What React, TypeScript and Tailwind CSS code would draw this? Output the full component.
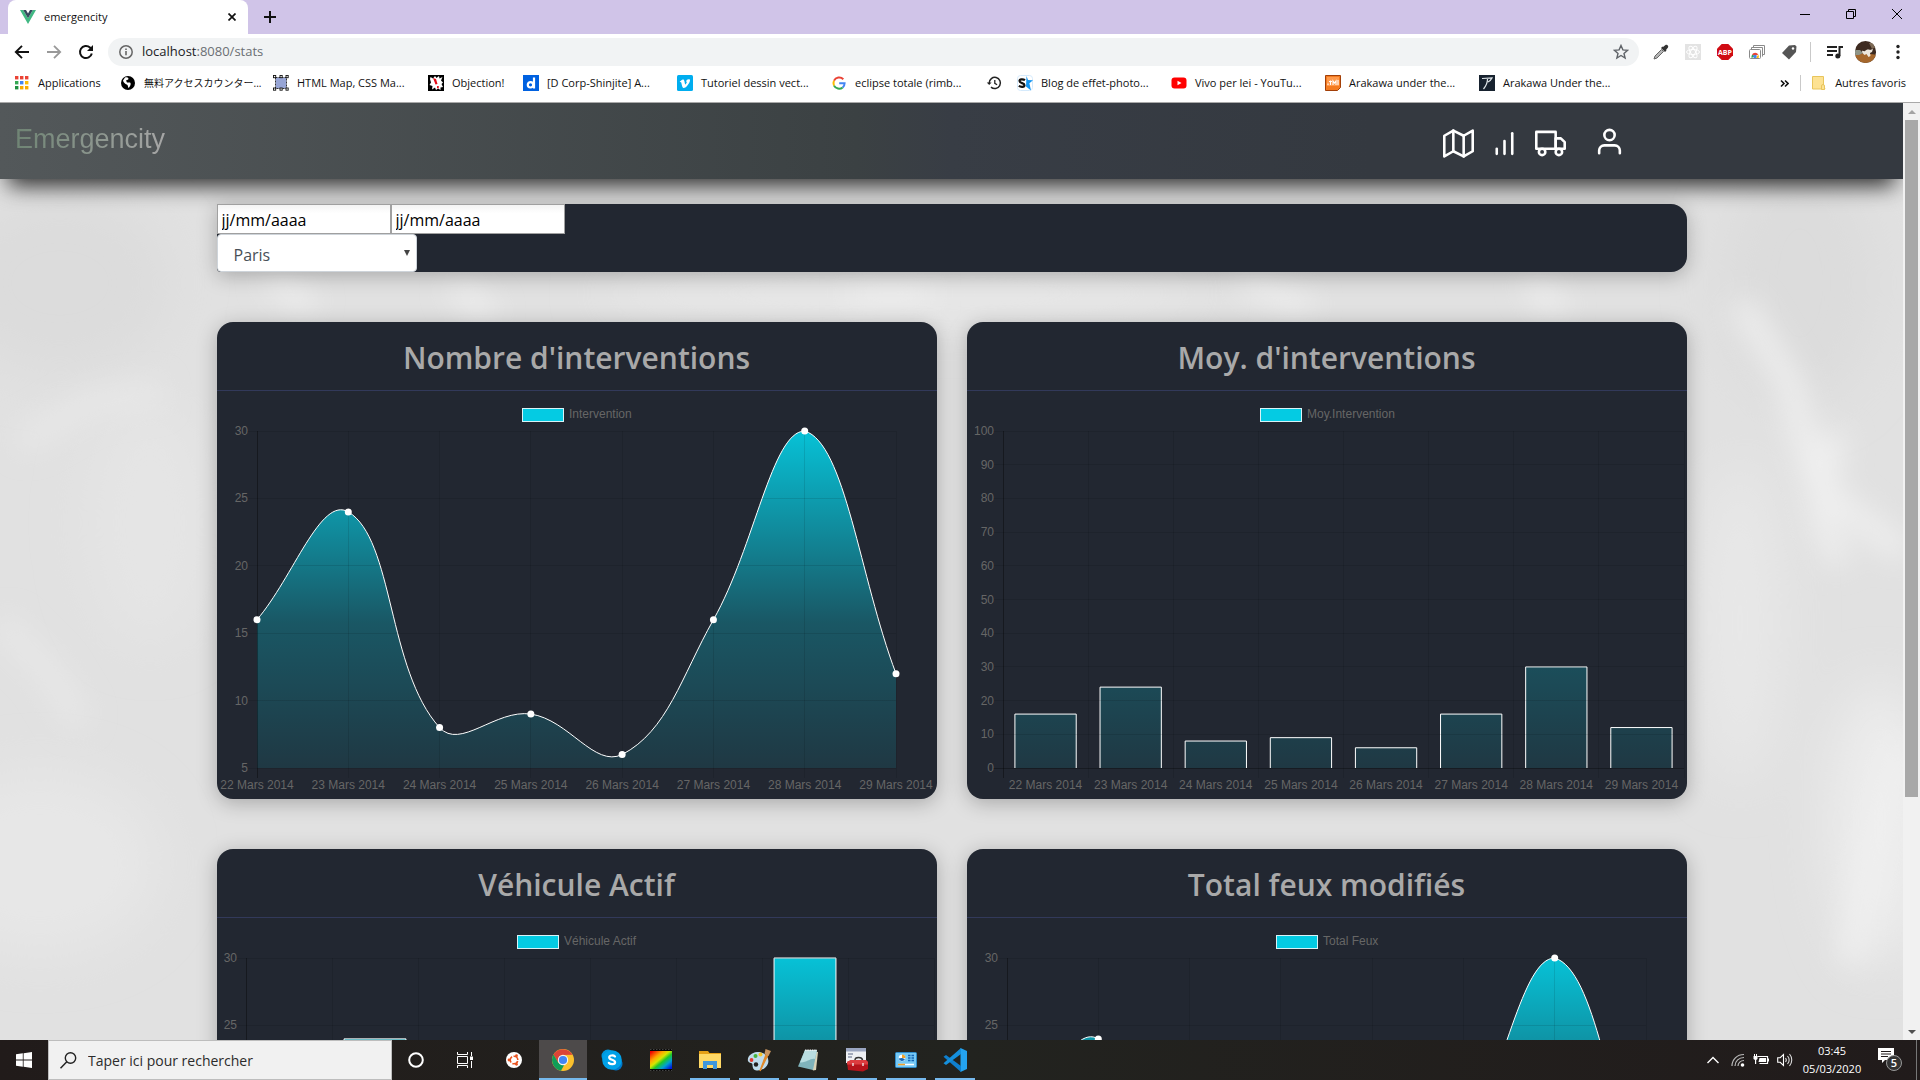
import type { ReactNode } from "react";
import { FiBarChart, FiMap, FiTruck, FiUser } from "react-icons/fi";

const UI = "font-['Open_Sans','Noto_Sans_CJK_JP',sans-serif]";

/* ---------- charts ---------- */

const DAYS = [22, 23, 24, 25, 26, 27, 28, 29].map((d) => `${d} Mars 2014`);
const VALUES = [16, 24, 8, 9, 6, 16, 30, 12];
const TOP = 40;
const BOTTOM = 377;

type Point = { x: number; y: number };

function splinePath(points: Point[], tension = 0.4) {
  const controls = points.map((p, i) => {
    const prev = points[i - 1] ?? p;
    const next = points[i + 1] ?? p;
    const d01 = Math.hypot(p.x - prev.x, p.y - prev.y);
    const d12 = Math.hypot(next.x - p.x, next.y - p.y);
    const s01 = d01 / (d01 + d12) || 0;
    const s12 = d12 / (d01 + d12) || 0;
    const clamp = (v: number) => Math.max(TOP, Math.min(BOTTOM, v));
    return {
      before: { x: p.x - tension * s01 * (next.x - prev.x), y: clamp(p.y - tension * s01 * (next.y - prev.y)) },
      after: { x: p.x + tension * s12 * (next.x - prev.x), y: clamp(p.y + tension * s12 * (next.y - prev.y)) },
    };
  });
  return points
    .map((p, i) => {
      if (i === 0) return `M${p.x} ${p.y}`;
      const a = controls[i - 1].after;
      const b = controls[i].before;
      return `C${a.x} ${a.y} ${b.x} ${b.y} ${p.x} ${p.y}`;
    })
    .join(" ");
}

type ChartProps = {
  id: string;
  kind: "line" | "bar";
  label: string;
  left: number;
  right: number;
  min: number;
  max: number;
  step: number;
  legendX: number;
};

function Chart({ id, kind, label, left, right, min, max, step, legendX }: ChartProps) {
  const y = (v: number) => BOTTOM - ((v - min) / (max - min)) * (BOTTOM - TOP);
  const slots = kind === "line" ? DAYS.length - 1 : DAYS.length;
  const slot = (right - left) / slots;
  const center = (i: number) => left + slot * (kind === "line" ? i : i + 0.5);
  const ticks = Array.from({ length: (max - min) / step + 1 }, (_, i) => min + i * step);
  const points = VALUES.map((v, i) => ({ x: center(i), y: y(v) }));
  const curve = splinePath(points);
  const bar = slot * 0.72;

  return (
    <svg viewBox="0 0 720 408" className="block h-auto w-full" role="img" aria-label={label}>
      <defs>
        <linearGradient id={id} gradientUnits="userSpaceOnUse" x1="0" y1="7" x2="0" y2="457">
          <stop offset="0" stopColor="#00e7ff" stopOpacity="0.9" />
          <stop offset="0.5" stopColor="#00e7ff" stopOpacity="0.25" />
          <stop offset="1" stopColor="#00e7ff" stopOpacity="0" />
        </linearGradient>
      </defs>

      {kind === "line" ? (
        <>
          <path d={`${curve} L${right} ${BOTTOM} L${left} ${BOTTOM} Z`} fill={`url(#${id})`} />
          <path d={curve} fill="none" stroke="#fff" strokeWidth="1" />
        </>
      ) : (
        points.map((p) => (
          <g key={p.x}>
            <rect x={p.x - bar / 2} y={p.y} width={bar} height={BOTTOM - p.y} fill={`url(#${id})`} />
            <path
              d={`M${p.x - bar / 2} ${BOTTOM} V${p.y} H${p.x + bar / 2} V${BOTTOM}`}
              fill="none"
              stroke="#fff"
              strokeWidth="1"
            />
          </g>
        ))
      )}

      <g stroke="#000" shapeRendering="crispEdges">
        {ticks.map((t) => (
          <line key={t} x1={left - 10} x2={right} y1={y(t)} y2={y(t)} strokeOpacity={t === 0 ? 0.3 : 0.1} />
        ))}
        {Array.from({ length: slots + 1 }, (_, i) => (
          <line
            key={i}
            x1={left + slot * i}
            x2={left + slot * i}
            y1={TOP}
            y2={BOTTOM + 10}
            strokeOpacity={i === 0 ? 0.35 : 0.1}
          />
        ))}
      </g>

      {kind === "line" && points.map((p) => <circle key={p.x} cx={p.x} cy={p.y} r="3.5" fill="#fff" />)}

      <rect x={legendX + 0.5} y="17.5" width="41" height="13" fill="#04cbe3" stroke="#d9f3f7" />
      <g className="font-['Liberation_Sans',sans-serif] text-[12px]" fill="#666">
        <text x={legendX + 47} y="27">
          {label}
        </text>
        {ticks.map((t) => (
          <text key={t} x={left - 9} y={y(t) + 4} textAnchor="end">
            {t}
          </text>
        ))}
        {DAYS.map((d, i) => (
          <text key={d} x={center(i)} y="398" textAnchor="middle">
            {d}
          </text>
        ))}
      </g>
    </svg>
  );
}

function ChartCard({ title, children }: { title: string; children: ReactNode }) {
  return (
    <section className="overflow-hidden rounded-2xl bg-[#222731] shadow-[0_4px_20px_rgba(0,0,0,0.25)]">
      <h2
        className={`${UI} flex h-[69px] items-center justify-center border-b border-[#32395a] pt-1 text-[30px] leading-9 font-semibold text-[#a9a9a9]`}
      >
        {title}
      </h2>
      {children}
    </section>
  );
}

/* ---------- browser chrome ---------- */

function Svg({ className = "size-4", box = "0 0 16 16", children }: { className?: string; box?: string; children: ReactNode }) {
  return (
    <svg viewBox={box} className={`${className} shrink-0`} fill="none" aria-hidden="true">
      {children}
    </svg>
  );
}

const HistoryIcon = (
  <Svg>
    <path d="M3.2 8a5.6 5.6 0 1 1 1.8 4.1" stroke="#222" strokeWidth="1.5" />
    <path d="M.8 7.4h4.8L3.2 10z" fill="#222" />
    <path d="M8.8 5v3.4l2.3 1.4" stroke="#222" strokeWidth="1.3" />
  </Svg>
);

const BOOKMARKS: { text: string; width: string; size?: string; icon: ReactNode }[] = [
  {
    text: "Applications",
    width: "w-[106px]",
    icon: (
      <Svg>
        {["#ea4335", "#ea4335", "#ea4335", "#34a853", "#4285f4", "#fbbc05", "#1e8e3e", "#f9ab00", "#f9ab00"].map((c, i) => (
          <rect key={i} x={1 + (i % 3) * 5} y={1 + Math.floor(i / 3) * 5} width="3.4" height="3.4" fill={c} />
        ))}
      </Svg>
    ),
  },
  {
    text: "無料アクセスカウンター...",
    width: "w-[153px]",
    size: "text-[10px]",
    icon: (
      <Svg>
        <circle cx="8" cy="8" r="7" fill="#000" />
        <path d="M5 2.5c3-.6 4 .6 3.2 2.1L6 5.6 7 7.5h3c1.6 1.5 0 4-1.5 5.5-.8-1.2-.3-3-1.800-3.500S3.500 7.500 3 5.500z" fill="#fff" />
      </Svg>
    ),
  },
  {
    text: "HTML Map, CSS Ma...",
    width: "w-[155px]",
    icon: (
      <Svg>
        <path d="M2.500 2.500h11v11h-11z" fill="#97a5d6" stroke="#333" strokeDasharray="2 1" />
        {[[.5, .5], [7, .5], [13, .5], [.5, 13], [7, 13], [13, 13]].map(([x, y]) => (
          <rect key={`${x}-${y}`} x={x} y={y} width="2.200" height="2.200" fill="#fff" stroke="#111" strokeWidth=".9" />
        ))}
      </Svg>
    ),
  },
  {
    text: "Objection!",
    width: "w-[95px]",
    icon: (
      <Svg>
        <rect width="16" height="16" fill="#000" />
        <path d="m2 4 .5-2 2.500 1.500L7 1l1.500 2L11 1l.5 2.500L14.500 2 13 5.500l2 2-1.500 1.500 1.500 3-2.500.5V15L10 13.500 8 15l-1-2.500-3 2 .5-3.500L1.500 10 3 7.500z" fill="#fff" />
        <path d="m5 3 3 1 1.500 5-2 .5zM9 11l2 .3-.5 2.200-1.500-.5z" fill="#e30b17" />
      </Svg>
    ),
  },
  {
    text: "[D Corp-Shinjite] A...",
    width: "w-[154px]",
    icon: (
      <Svg>
        <rect width="16" height="16" fill="#0061e0" />
        <circle cx="7.500" cy="9.800" r="2.700" stroke="#fff" strokeWidth="2.200" />
        <path d="M11 2.500V13.500" stroke="#fff" strokeWidth="2.200" />
      </Svg>
    ),
  },
  {
    text: "Tutoriel dessin vect...",
    width: "w-[154px]",
    icon: (
      <Svg>
        <rect width="16" height="16" rx="1.500" fill="#00adef" />
        <path
          d="M13 5.400c-.1 1.300-1 3-2.600 5.100C8.800 12.600 7.400 13 6.600 12.900c-.9 0-1.400-1.300-1.900-3.400C4.400 8.200 4.300 7 3.700 7l-.5.3-.5-.6C4 5.700 5 4.500 5.800 4.400c.9-.1 1.400.5 1.700 2.100.3 1.800.6 3 .9 3 .3 0 1.400-1.700 1.400-2.300 0-.5-.3-.7-.9-.5.5-1.700 1.500-2.500 2.800-2.500 1 0 1.400.4 1.300 1.200z"
          fill="#fff"
        />
      </Svg>
    ),
  },
  {
    text: "eclipse totale (rimb...",
    width: "w-[155px]",
    icon: (
      <Svg>
        <path d="M12.300 4.200A5.700 5.700 0 0 0 3 5.700" stroke="#ea4335" strokeWidth="2" />
        <path d="M3 5.700a5.700 5.700 0 0 0 0 4.900" stroke="#fbbc05" strokeWidth="2" />
        <path d="M3 10.600a5.700 5.700 0 0 0 8.700 1.800" stroke="#34a853" strokeWidth="2" />
        <path d="M11.700 12.400a5.700 5.700 0 0 0 1.900-4.200H8.200" stroke="#4285f4" strokeWidth="2" />
      </Svg>
    ),
  },
  { text: "", width: "w-[31px]", icon: HistoryIcon },
  {
    text: "Blog de effet-photo...",
    width: "w-[154px]",
    icon: (
      <Svg>
        <rect x=".5" y=".5" width="15" height="15" rx="3" fill="#fff" stroke="#d5eafc" />
        <path d="m9.500 1 1.500 4 5 .2-3.600 3L14 15.500l-5-4z" fill="#1596f2" />
        <path d="M8 5.200C6 3.800 2.500 4 2.500 6c0 2.500 5 1.800 5 4.200 0 2-3.600 2-5.700.7" stroke="#111" strokeWidth="2.200" />
      </Svg>
    ),
  },
  {
    text: "Vivo per lei - YouTu...",
    width: "w-[154px]",
    icon: (
      <Svg>
        <rect x=".5" y="2.500" width="15" height="11" rx="3" fill="#f00" />
        <path d="m6.500 5.800 4 2.200-4 2.200z" fill="#fff" />
      </Svg>
    ),
  },
  {
    text: "Arakawa under the...",
    width: "w-[154px]",
    icon: (
      <Svg>
        <path d="M.5.5h15v12l-3 3H.5z" fill="#f47b20" stroke="#a23f08" />
        <path d="M2 2h12v9H2z" fill="#ff9a4d" />
        <path d="M3 10V8.500M5.500 10V5.500M4 6.500h3M8 10V6l1.500 2L11 6v4M13 5v5" stroke="#fff" strokeWidth="1.100" />
      </Svg>
    ),
  },
  {
    text: "Arakawa Under the...",
    width: "w-[154px]",
    icon: (
      <Svg>
        <rect width="16" height="16" fill="#17222f" />
        <path d="M3 3.500 13 3c-1 2-2 3-4 4M8.500 4c0 4-1.500 7-4 10" stroke="#dfe6ea" strokeWidth="1.200" />
      </Svg>
    ),
  },
];

function Browser() {
  return (
    <header className={`${UI} shrink-0 bg-white text-[11px] text-[#111]`}>
      <div className="flex h-[34px] bg-[#d0c4e8] pl-2">
        <div className="flex w-60 items-center rounded-t-lg bg-white pr-2 pl-3">
          <Svg className="size-4">
            <path d="M0 1h3.200L8 9.300 12.800 1H16L8 15z" fill="#41b883" />
            <path d="M3.200 1H6l2 3.400L10 1h2.800L8 9.300z" fill="#35495e" />
          </Svg>
          <span className="ml-2 flex-1">emergencity</span>
          <button aria-label="Fermer l'onglet" className="flex size-4 items-center justify-center">
            <Svg className="size-2" box="0 0 8 8">
              <path d="m.5.5 7 7m0-7-7 7" stroke="#111" strokeWidth="1.700" />
            </Svg>
          </button>
        </div>
        <button aria-label="Nouvel onglet" className="ml-4 flex items-center">
          <Svg className="size-3" box="0 0 12 12">
            <path d="M6 0v12M0 6h12" stroke="#111" strokeWidth="2" />
          </Svg>
        </button>
        <div className="ml-auto flex h-7 text-black">
          <button aria-label="Réduire" className="flex w-[46px] items-center justify-center">
            <Svg className="size-[10px]" box="0 0 10 10">
              <path d="M0 5.500h10" stroke="currentColor" />
            </Svg>
          </button>
          <button aria-label="Restaurer" className="flex w-[46px] items-center justify-center">
            <Svg className="size-[10px]" box="0 0 10 10">
              <path d="M.5 2.500h7v7h-7zM2.500 2.500v-2h7v7h-2" stroke="currentColor" />
            </Svg>
          </button>
          <button aria-label="Fermer" className="flex w-[46px] items-center justify-center">
            <Svg className="size-[10px]" box="0 0 10 10">
              <path d="m0 0 10 10M10 0 0 10" stroke="currentColor" />
            </Svg>
          </button>
        </div>
      </div>

      <div className="flex h-[34px] items-center pt-[2px]">
        <nav className="flex w-[108px] shrink-0 items-center gap-4 pl-[14px]">
          <button aria-label="Précédent">
            <Svg>
              <path d="M15 8H2m6-6.200L1.800 8 8 14.200" stroke="#111" strokeWidth="1.900" />
            </Svg>
          </button>
          <button aria-label="Suivant">
            <Svg>
              <path d="M1 8h13M8 1.800 14.200 8 8 14.200" stroke="#999" strokeWidth="1.800" />
            </Svg>
          </button>
          <button aria-label="Actualiser">
            <Svg>
              <path d="M13.800 9.500A6 6 0 1 1 12 3.600l1.500 1.400" stroke="#111" strokeWidth="2" />
              <path d="M15 1v6H9z" fill="#111" />
            </Svg>
          </button>
        </nav>
        <div className="flex h-7 flex-1 items-center rounded-full bg-[#f1f3f4] pr-[10px] pl-[11px]">
          <Svg className="size-[14px]" box="0 0 14 14">
            <circle cx="7" cy="7" r="6.200" stroke="#666" strokeWidth="1.500" />
            <path d="M7 6v4.300M7 3.500v1.600" stroke="#666" strokeWidth="1.600" />
          </Svg>
          <div className="ml-[9px] flex-1 text-[13px] text-[#6b6f73]">
            <span className="text-[#202124]">localhost</span>:8080/stats
          </div>
          <button aria-label="Ajouter aux favoris">
            <Svg>
              <path d="m8 1.500 1.900 4.400 4.700.4L11 9.400l1.100 4.600L8 11.500 3.900 14 5 9.400 1.400 6.300l4.700-.4z" stroke="#5f6368" strokeWidth="1.400" />
            </Svg>
          </button>
        </div>
        <div className="flex w-[281px] shrink-0 items-center pl-[14px]">
          <div className="flex flex-1 items-center gap-4">
            <Svg>
              <path d="m1 15 1-3 6.500-6.500 2 2L4 14z" fill="#b5b5b5" stroke="#666" />
              <path d="m8 4 4 4 1.500-1.500-.5-.5 2-2.500C16 2 14 0 12.500 1L10 3l-.5-.5z" fill="#333" />
            </Svg>
            <Svg>
              <rect width="16" height="16" fill="#e3e3e3" />
              <g stroke="#fff">
                <ellipse cx="8" cy="8" rx="6.500" ry="2.500" />
                <ellipse cx="8" cy="8" rx="6.500" ry="2.500" transform="rotate(60 8 8)" />
                <ellipse cx="8" cy="8" rx="6.500" ry="2.500" transform="rotate(120 8 8)" />
              </g>
            </Svg>
            <svg viewBox="0 0 16 16" className="size-4" aria-hidden="true">
              <path d="M4.700 0h6.600L16 4.700v6.600L11.300 16H4.700L0 11.300V4.700z" fill="#d00b13" />
              <text x="8" y="10.500" textAnchor="middle" fill="#fff" className="text-[7px] font-bold">
                ABP
              </text>
            </svg>
            <Svg>
              <path d="M4.500 4V1.500h11v9H13" stroke="#8a8a8a" />
              <path d="M2.500 6V3.500h11v9" stroke="#8a8a8a" />
              <rect x=".5" y="5.500" width="11" height="9" rx="1" fill="#fff" stroke="#8a8a8a" />
              <path d="M2.500 14a3.500 3.500 0 0 1 1-3.500l2.500 2z" fill="#34a853" />
              <path d="M3 10.500a3.600 3.600 0 0 1 6.300 0L6 12z" fill="#ea4335" />
              <path d="M9.300 10.500A3.500 3.500 0 0 1 9.500 14H7z" fill="#fbbc05" />
              <circle cx="6" cy="12.500" r="1.700" fill="#4285f4" />
            </Svg>
            <Svg>
              <path d="M8 1.500 14 1l1.500 1.500L15 8l-7 7.500L1 9z" fill="#555" />
              <circle cx="12" cy="4.500" r="1.200" fill="#fff" />
            </Svg>
            <span className="-ml-[3px] h-5 w-px bg-[#c9c9c9]" />
            <Svg className="size-4">
              <path d="M0 3h10M0 7h10M0 11h6" stroke="#222" strokeWidth="1.800" />
              <path d="M12.500 12V3H16" stroke="#222" strokeWidth="2" />
              <circle cx="10.800" cy="12" r="2.500" fill="#222" />
            </Svg>
          </div>
          <div className="mr-[20px] ml-3 size-[22px] overflow-hidden rounded-full">
            <Svg className="size-[22px]" box="0 0 22 22">
              <rect width="22" height="22" fill="#3d2a20" />
              <path d="M0 14 9 12l13 2v8H0z" fill="#a5672c" />
              <path d="M0 9h5l3 3-4 2H0z" fill="#8f9588" />
              <path d="M14 2h5l2 4-4 2z" fill="#7d6a55" />
              <path d="M7 10c1-1 2 1 3 0s3-2 5-1l3-1-1 3-2 1 .5 3-2 1-2-3-2 1-2-2z" fill="#ece6dc" />
            </Svg>
          </div>
          <button aria-label="Menu" className="mr-[20px]">
            <Svg className="h-4 w-1" box="0 0 4 16">
              <circle cx="2" cy="2.500" r="1.700" fill="#222" />
              <circle cx="2" cy="8" r="1.700" fill="#222" />
              <circle cx="2" cy="13.500" r="1.700" fill="#222" />
            </Svg>
          </button>
        </div>
      </div>

      <div className="flex h-[35px] items-center border-b border-[#a9a9a9] pr-[14px] pb-1 pl-[14px]">
        <nav className="flex flex-1 overflow-hidden">
          {BOOKMARKS.map((b, i) => (
            <a
              key={i}
              href="#"
              aria-label={b.text || "Historique"}
              className={`${b.width} ${b.size ?? ""} flex shrink-0 items-center gap-2 whitespace-nowrap`}
            >
              {b.icon}
              {b.text}
            </a>
          ))}
        </nav>
        <button aria-label="Plus de favoris" className="mr-[11px]">
          <Svg className="size-[9px]" box="0 0 9 9">
            <path d="m1 1.500 3 3-3 3m4-6 3 3-3 3" stroke="#111" strokeWidth="1.600" />
          </Svg>
        </button>
        <span className="mr-[10px] h-4 w-px bg-[#c9c9c9]" />
        <a href="#" className="flex items-center gap-2">
          <Svg>
            <path d="M1.500 1.500h11v9l1.500 3.500H1.500z" fill="#fde293" stroke="#e8c55c" />
            <path d="M10.500 14.500V11a1.500 1.500 0 0 1 3 0v3.500z" fill="#fde293" stroke="#e8c55c" />
          </Svg>
          Autres favoris
        </a>
      </div>
    </header>
  );
}

/* ---------- taskbar ---------- */

type Task = { name: string; open?: boolean; active?: boolean; icon: ReactNode };

const TASKS: Task[] = [
  {
    name: "Cortana",
    icon: (
      <Svg className="size-4">
        <circle cx="8" cy="8" r="6.800" stroke="#fff" strokeWidth="2" />
      </Svg>
    ),
  },
  {
    name: "Vue des tâches",
    icon: (
      <Svg className="size-4">
        <path d="M.5 0v2.500h10V0M.5 4.500h10v7H.5zM.5 16v-2.500h10V16M14.500 0v4M14.500 9v7" stroke="#fff" />
        <rect x="13" y="4.500" width="3" height="3.500" fill="#fff" />
      </Svg>
    ),
  },
  {
    name: "Ubuntu",
    icon: (
      <Svg className="size-4">
        <circle cx="8" cy="8" r="8" fill="#fff" />
        <circle cx="8" cy="8" r="3.800" stroke="#e95420" strokeWidth="1.600" strokeDasharray="6.500 1.460" strokeDashoffset="-1" />
        <circle cx="3" cy="8" r="1.400" fill="#e95420" />
        <circle cx="10.500" cy="3.700" r="1.400" fill="#e95420" />
        <circle cx="10.500" cy="12.300" r="1.400" fill="#e95420" />
      </Svg>
    ),
  },
  {
    name: "Chrome",
    active: true,
    icon: (
      <Svg className="size-[22px]" box="0 0 22 22">
        <circle cx="11" cy="11" r="11" fill="#fbc02d" />
        <path d="M1.500 5.500A11 11 0 0 1 20.500 5.800L11 6 6 13.500z" fill="#db4437" />
        <path d="M1.500 5.500 6.300 13.700l5.700 2.600-3 5.500A11 11 0 0 1 1.500 5.500z" fill="#0f9d58" />
        <circle cx="11" cy="11" r="5.200" fill="#f4f4f4" />
        <circle cx="11" cy="11" r="4.100" fill="#4285f4" />
      </Svg>
    ),
  },
  {
    name: "Skype",
    icon: (
      <Svg className="size-[22px]" box="0 0 22 22">
        <circle cx="7" cy="7" r="6.500" fill="#0097dc" />
        <circle cx="15" cy="15" r="6.500" fill="#0078ca" />
        <circle cx="11" cy="11" r="9.800" fill="#00a1e8" />
        <path d="M14 7.500C12.500 6 8.200 6 8.200 8.400c0 2.800 5.900 1.900 5.900 4.800 0 2.500-4.700 2.300-6.300.7" stroke="#fff" strokeWidth="2.200" strokeLinecap="round" />
      </Svg>
    ),
  },
  {
    name: "Vidéo",
    icon: (
      <Svg className="size-[22px]" box="0 0 22 22">
        <defs>
          <linearGradient id="rainbow" x1="0" y1="0" x2="1" y2="1">
            <stop offset="0.05" stopColor="#f00000" />
            <stop offset="0.3" stopColor="#ffa500" />
            <stop offset="0.45" stopColor="#d6e600" />
            <stop offset="0.58" stopColor="#1ec828" />
            <stop offset="0.75" stopColor="#00a0d0" />
            <stop offset="0.95" stopColor="#0018e0" />
          </linearGradient>
        </defs>
        <rect width="22" height="22" fill="#080808" />
        <path d="M0 .5h22M0 21.500h22" stroke="#444" strokeDasharray="1.500 1.500" />
        <rect y="2" width="22" height="18" fill="url(#rainbow)" />
      </Svg>
    ),
  },
  {
    name: "Explorateur de fichiers",
    open: true,
    icon: (
      <Svg className="size-[22px]" box="0 0 22 22">
        <path d="M0 2h9l1.500 2H22v15H0z" fill="#e6a117" />
        <path d="M0 5h22v14H0z" fill="#ffd966" />
        <path d="M4 20v-8h14v8h-4v-4H8v4z" fill="#3f97dc" />
      </Svg>
    ),
  },
  {
    name: "Paint",
    open: true,
    icon: (
      <Svg className="size-6" box="0 0 24 24">
        <path d="M10 4C4 4.500 0 9 1 13c.6 2 3 1.500 4 2.500s0 4 2 6c3 2.500 12 .5 14-6C23 9 17 3.500 10 4z" fill="#bfdcec" />
        <circle cx="4.500" cy="12" r="1.900" fill="#e23b2e" />
        <circle cx="8.500" cy="8" r="2" fill="#46b43c" />
        <circle cx="13.500" cy="6.500" r="2" fill="#f3c22b" />
        <circle cx="9" cy="16.500" r="2.200" fill="#23201e" />
        <path d="m13 23 6-16 1.500.7z" fill="#e08a2c" stroke="#e08a2c" strokeWidth="1.500" />
        <path d="m17.500 6 1-5L24 3l-2.500 5z" fill="#c9955f" />
      </Svg>
    ),
  },
  {
    name: "Bloc-notes",
    open: true,
    icon: (
      <Svg className="size-[22px]" box="0 0 22 22">
        <path d="m8 2 13 1-2 18-3 .5z" fill="#d8d2b8" />
        <path d="M8 1h12l-4 20-15-3.500z" fill="#7fb3bb" />
        <path d="M8 1h12l-2 9c-5-1-8 4-15 3.500z" fill="#b9dde0" />
        <path d="M8 1.200h12" stroke="#e9eef0" strokeWidth="1.600" strokeDasharray="1.500 .8" />
      </Svg>
    ),
  },
  {
    name: "Outils",
    open: true,
    icon: (
      <Svg className="size-6" box="0 0 24 24">
        <rect x="1" width="20" height="15" fill="#eef0f4" />
        <path d="M1 0h20v3.500H1z" fill="#9aa5c0" />
        <path d="M3 6h5m-5 3h4" stroke="#8b93a8" strokeWidth="1.500" />
        <path d="M10 12c0-3.500 7-3.500 7.500 0" stroke="#333" strokeWidth="1.500" />
        <path d="m2 14 4-2h15l2 2v7l-5 2.500L3 22z" fill="#b5141b" />
        <path d="m2 14 4-2h15l2 2v2.500L2 16.500z" fill="#dc3c3f" />
        <path d="M8 15v3m10-3v3" stroke="#eee" strokeWidth="1.300" />
      </Svg>
    ),
  },
  {
    name: "Panneau de configuration",
    open: true,
    icon: (
      <Svg className="size-[22px]" box="0 0 22 22">
        <rect x=".5" y="3.500" width="21" height="15" rx="1" fill="#76c9f5" stroke="#2f8ccb" />
        <circle cx="7" cy="9" r="3.300" fill="#fff" />
        <path d="M7 9V5.500A3.500 3.500 0 0 1 10.500 9z" fill="#f3a32b" />
        <path d="M3.700 9.500A3.300 3.300 0 0 0 10 10L7 9z" fill="#1565b5" />
        <path d="M13 6.500h6M13 9h6m-6 2.500h6" stroke="#1565b5" strokeWidth="1.500" strokeDasharray="2.500 1" />
        <path d="M3 15.500h16" stroke="#fff" strokeWidth="1.500" />
        <path d="M3 15.500h7" stroke="#f3a32b" strokeWidth="1.500" />
      </Svg>
    ),
  },
  {
    name: "Visual Studio Code",
    open: true,
    icon: (
      <Svg className="size-6" box="0 0 24 24">
        <path d="M17.500 0 24 3v18l-6.500 3z" fill="#24a3f0" />
        <path d="M.5 8.800 3 7l15 11v6z" fill="#0f7fce" />
        <path d="M.5 15.200 3 17 18 6V0z" fill="#1590dd" />
      </Svg>
    ),
  },
];

function Taskbar() {
  return (
    <footer className={`${UI} flex h-10 shrink-0 bg-linear-to-r from-[#211b1a] via-[#22231f] to-[#211b1b] text-white`}>
      <button aria-label="Démarrer" className="flex w-12 items-center justify-center">
        <Svg>
          <path d="M0 2.300 6.800 1.300V7.600H0zM7.600 1.200 16 0v7.600H7.600zM0 8.400h6.800v6.300L0 13.700zM7.600 8.400H16V16l-8.400-1.200z" fill="#fff" />
        </Svg>
      </button>
      <label className="flex w-[344px] items-center border border-[#bdbdbd] bg-[#f1f1f1] pl-[11px]">
        <Svg className="size-[17px]" box="0 0 17 17">
          <circle cx="10.500" cy="6" r="5.200" stroke="#222" strokeWidth="1.400" />
          <path d="M6.800 9.800.5 16.300" stroke="#222" strokeWidth="1.500" />
        </Svg>
        <input
          type="text"
          aria-label="Rechercher"
          placeholder="Taper ici pour rechercher"
          className="ml-[11px] w-full bg-transparent text-[14px] placeholder:text-[#2b2b2b]"
        />
      </label>
      <div className="flex gap-px">
        {TASKS.map((t) => (
          <button
            key={t.name}
            aria-label={t.name}
            className={`flex w-12 flex-col items-center ${t.active ? "bg-[#4d4a4a]" : ""}`}
          >
            <span className="flex w-full flex-1 items-center justify-center pt-[2px]">{t.icon}</span>
            <span className={`h-[2px] ${t.active ? "w-full bg-[#76b9ed]" : t.open ? "w-10 bg-[#76b9ed]" : "w-10"}`} />
          </button>
        ))}
      </div>
      <div className="ml-auto flex items-center">
        <Svg className="mr-3 h-2 w-3" box="0 0 12 8">
          <path d="M.5 7 6 1.500 11.500 7" stroke="#fff" strokeWidth="1.400" />
        </Svg>
        <Svg className="mr-2 size-[14px]" box="0 0 14 14">
          <path d="M1 13C1 6.500 6 1.500 13 1.500M4 13c0-5 4-8.500 9-8.500M7 13c0-3 2.500-5.500 6-5.500" stroke="#bbb" strokeWidth="1.200" />
          <circle cx="11.500" cy="12" r="1.800" fill="#fff" />
        </Svg>
        <Svg className="mr-2 h-[14px] w-4" box="0 0 16 14">
          <path d="M4.500 3.500h10v7h-8" stroke="#fff" strokeWidth="1.200" />
          <path d="M6.500 5H13v4H5.500zM15 5.500h1v3h-1zM.5 3h4v3L3.200 7v4H2V7L.5 6z" fill="#fff" />
          <path d="M1.500 1v2m2-2v2" stroke="#fff" />
        </Svg>
        <Svg className="mr-2 h-[14px] w-[17px]" box="0 0 17 14">
          <path d="M.7 4.700h2.500L6.500 1.500v11L3.200 9.300H.7z" stroke="#fff" strokeWidth="1.100" />
          <path d="M8.500 5c1 1.200 1 2.800 0 4m2-6c2 2.400 2 5.600 0 8m2-10c3 3.500 3 8.500 0 12" stroke="#ddd" strokeWidth="1.100" />
        </Svg>
        <div className="w-[60px] text-center text-[11px] leading-[18px]">
          <div>03:45</div>
          <div>05/03/2020</div>
        </div>
        <div className="relative mr-[12px] ml-4 h-6 w-[26px]">
          <Svg className="h-[15px] w-4" box="0 0 16 15">
            <path d="M0 0h16v12H7l-3 3v-3H0z" fill="#fff" />
            <path d="M3 3.500h10M3 6h10M3 8.500h7" stroke="#211b1b" />
          </Svg>
          <span className="absolute top-[7px] left-2 flex size-4 items-center justify-center rounded-full border border-[#999] bg-[#333] text-[11px] font-semibold">
            5
          </span>
        </div>
        <span className="mr-[3px] h-10 w-px bg-[#777]" />
      </div>
    </footer>
  );
}

/* ---------- page ---------- */

const NAV = [
  { name: "Carte", icon: <FiMap size={31} /> },
  { name: "Statistiques", icon: <FiBarChart size={31} /> },
  { name: "Véhicules", icon: <FiTruck size={31} /> },
];

function Marble() {
  return (
    <svg
      className="absolute inset-0 -z-10 h-full w-full"
      viewBox="0 0 1903 937"
      preserveAspectRatio="none"
      aria-hidden="true"
    >
      <defs>
        <filter id="soft" x="-50%" y="-50%" width="200%" height="200%">
          <feGaussianBlur stdDeviation="26" />
        </filter>
        <filter id="vein" x="-50%" y="-50%" width="200%" height="200%">
          <feGaussianBlur stdDeviation="14" />
        </filter>
      </defs>
      <rect width="1903" height="937" fill="#e1e1e1" />
      <g filter="url(#soft)">
        <ellipse cx="60" cy="180" rx="110" ry="90" fill="#dcdcdc" />
        <ellipse cx="150" cy="420" rx="60" ry="120" fill="#e5e5e5" />
        <ellipse cx="40" cy="760" rx="120" ry="90" fill="#e7e7e7" />
        <ellipse cx="1800" cy="180" rx="80" ry="120" fill="#dcdcdc" />
        <ellipse cx="1740" cy="520" rx="40" ry="160" fill="#e8e8e8" />
        <ellipse cx="1880" cy="720" rx="50" ry="140" fill="#ededed" />
        <ellipse cx="900" cy="190" rx="300" ry="24" fill="#e9e9e9" />
      </g>
      <g filter="url(#vein)" fill="none" stroke="#ededed" strokeWidth="22">
        <path d="M270 170 310 205M455 180 490 215M850 190h80M1240 175 1310 205M1530 175 1560 210" />
        <path d="M0 520 50 570 80 620M20 340 90 300 160 290" stroke="#e8e8e8" />
        <path d="M1740 200 1790 280 1815 380 1903 450M1835 330 1820 410 1840 460" stroke="#f0f0f0" />
        <path d="M1903 640 1870 760 1850 860" stroke="#f0f0f0" />
      </g>
    </svg>
  );
}

export default function App() {
  return (
    <div className="flex h-screen flex-col overflow-hidden">
      <Browser />
      <div className="flex min-h-0 flex-1">
        <div className="relative isolate flex-1 overflow-hidden">
          <Marble />
          <header className="flex h-[76px] items-center justify-between bg-[linear-gradient(90deg,#53585a_0%,#3b4143_45%,#383d45_50%,#343940_72%,#343940_100%)] pr-[278px] pl-[15px] shadow-[0_15px_22px_-8px_rgba(0,0,0,0.8)]">
            <a
              href="#"
              className="bg-linear-to-r from-[#6f8474] to-[#a6a6a6] bg-clip-text pb-1 font-['Liberation_Sans',sans-serif] text-[27px] leading-9 text-transparent"
            >
              Emergencity
            </a>
            <nav className="flex items-center gap-[15px] text-white">
              {NAV.map((n) => (
                <a key={n.name} href="#" aria-label={n.name} className="pt-1">
                  {n.icon}
                </a>
              ))}
              <a href="#" aria-label="Profil" className="ml-[13px]">
                <FiUser size={31} />
              </a>
            </nav>
          </header>

          <main className="mx-auto flex max-w-[1470px] flex-col gap-[50px] pt-[25px]">
            <form
              className={`${UI} overflow-hidden rounded-tr-2xl rounded-br-2xl rounded-bl-sm bg-[#222731] shadow-[0_4px_20px_rgba(0,0,0,0.25)]`}
            >
              <div className="flex">
                {["Date de début", "Date de fin"].map((n) => (
                  <input
                    key={n}
                    type="text"
                    aria-label={n}
                    placeholder="jj/mm/aaaa"
                    className="h-[30px] w-[174px] border border-[#a0a0a0] bg-linear-to-b from-[#f4f4f4] to-white to-30% px-1 pt-px text-[16px] placeholder:text-black"
                  />
                ))}
              </div>
              <div className="relative w-[200px]">
                <select
                  aria-label="Ville"
                  className="block h-[38px] w-full appearance-none rounded-sm border border-[#ced4da] bg-white pt-[3px] pl-4 text-[16px] text-[#495057]"
                >
                  <option>Paris</option>
                </select>
                <span className="pointer-events-none absolute top-4 right-[7px] border-x-[3px] border-t-[6px] border-x-transparent border-t-[#444]" />
              </div>
            </form>

            <div className="grid grid-cols-2 gap-x-[30px] gap-y-[50px]">
              <ChartCard title="Nombre d'interventions">
                <Chart id="g1" kind="line" label="Intervention" left={40} right={679} min={5} max={30} step={5} legendX={305} />
              </ChartCard>
              <ChartCard title="Moy. d'interventions">
                <Chart id="g2" kind="bar" label="Moy.Intervention" left={36} right={717} min={0} max={100} step={10} legendX={293} />
              </ChartCard>
              <ChartCard title="Véhicule Actif">
                <Chart id="g3" kind="bar" label="Véhicule Actif" left={29} right={717} min={5} max={30} step={5} legendX={300} />
              </ChartCard>
              <ChartCard title="Total feux modifiés">
                <Chart id="g4" kind="line" label="Total Feux" left={40} right={679} min={5} max={30} step={5} legendX={309} />
              </ChartCard>
            </div>
          </main>
        </div>

        <div className="flex w-[17px] shrink-0 flex-col items-center bg-[#f1f1f1]">
          <div className="flex h-[17px] items-center">
            <span className="border-x-4 border-b-4 border-x-transparent border-b-[#a3a3a3]" />
          </div>
          <div className="flex w-full flex-1 flex-col items-center">
            <div className="h-3/4 w-[13px] bg-[#a8a8a8]" />
          </div>
          <div className="flex h-[17px] items-center">
            <span className="border-x-4 border-t-4 border-x-transparent border-t-[#505050]" />
          </div>
        </div>
      </div>
      <Taskbar />
    </div>
  );
}
